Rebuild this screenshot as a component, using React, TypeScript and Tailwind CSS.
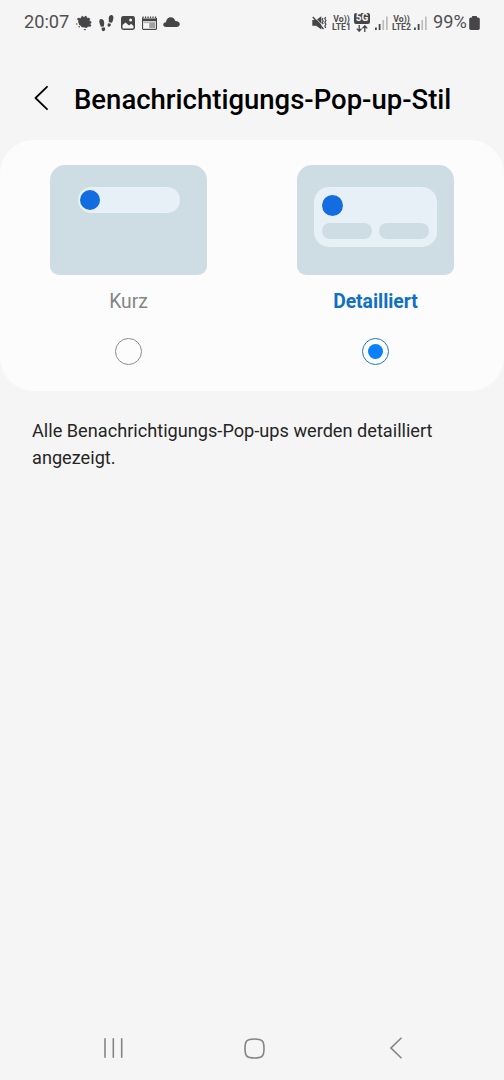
import type { ReactNode } from "react";

function LeafIcon() {
  return (
    <svg className="ml-[7px] h-[18px] w-4 shrink-0" viewBox="0 0 16 18" fill="#464648">
      <path d="M1.400 4.600Q3 3.600 4.800 4.700 5.200 2.200 6.600 2.300L8.200 3.600Q9.200 1.600 10.300 2.300L11 4.300Q13.500 3.500 13.700 4.600 13.900 6 13.200 7 15.500 7.200 15.300 8.400 14.800 9.500 13.600 9.900 15.600 11 15 11.900 13.800 12.700 12.200 12.200 11 13.800 9.800 13.700L8 13.100Q5.200 13.500 4.700 11.400 2.600 11.100 3 9.200 1.800 8 2.700 6.700 1.200 6 1.400 4.600Z" stroke="#464648" strokeLinejoin="round" strokeWidth=".5" />
      <circle cx=".8" cy="10" r=".7" />
      <circle cx="3.200" cy="12.700" r=".8" />
      <path d="M7.400 15h2.800l-1.200 1.400Z" />
    </svg>
  );
}

function StepsIcon() {
  return (
    <svg className="ml-[7px] h-[18px] w-[15px] shrink-0" viewBox="0 0 15 18" fill="#464648">
      <path d="M.3 7.300C.3 5.500 1.200 4.800 2.500 5c1.700.2 2.800 2.100 2.700 4.100L4.900 12.400 1.900 12.700C1.200 10.800.3 9 .3 7.300Z" />
      <path d="m2.600 13.700 3-.4c1 1.600.8 3.400-.7 3.800-1.700.4-2.400-1.200-2.300-3.400Z" />
      <path d="M14.400 3.600c0-2-1-2.900-2.300-2.600-1.600.3-2.500 2-2.400 3.800l.2 3.500 3.100.5c.7-1.600 1.400-3.300 1.400-5.200Z" />
      <path d="m11.900 9.700-2.900-.5c-.8 1.700-.6 3.100.6 3.500 1.500.3 2.300-1.100 2.300-3Z" />
    </svg>
  );
}

function ImageIcon() {
  return (
    <svg className="ml-[7px] h-3.5 w-3.5 shrink-0" viewBox="0 0 14 14">
      <rect width="14" height="14" rx="2.400" fill="#464648" />
      <path d="m1.500 9 3-2.600 3.600 3.100 2-1.700 2.400 2.200v1.600q0 .9-.9.900H2.400q-.9 0-.9-.9Z" fill="#f5f5f5" />
      <circle cx="9.600" cy="4" r="1.500" fill="#f5f5f5" />
    </svg>
  );
}

function NewsIcon() {
  return (
    <svg className="ml-[7px] h-3.5 w-[15px] shrink-0" viewBox="0 0 15 14" fill="none">
      <path d="M0 2h15v10.600q0 1.400-1.400 1.400H1.400Q0 14 0 12.600Z" fill="#464648" />
      <path d="M.4 1.200h14.200" stroke="#464648" strokeWidth="1.400" strokeDasharray="1.300 1.200" />
      <path d="M1.200 2.500h12.600" stroke="#a5a5a5" strokeWidth=".8" />
      <path d="M1.100 5.200h12.800v7.600H1.100Z" fill="#f5f5f5" />
      <path d="M1.800 6.600h11.400" stroke="#a5a5a5" strokeWidth=".9" />
      <path d="M7.200 7h6v5H7.200Z" fill="#a0a0a0" />
    </svg>
  );
}

function CloudIcon() {
  return (
    <svg className="mb-px ml-1.5 h-2.5 w-[17px] shrink-0" viewBox="0 0 17 10" fill="#464648">
      <path d="M3.100 10C1.300 10 .2 9 .2 7.600c0-1.400 1.100-2.400 2.700-2.400C3.400 2.100 5.200.2 7.800.2c2.300 0 3.900 1.400 4.500 3.700 2.600-.1 4.500 1.200 4.500 3.200 0 1.800-1.400 2.900-3.300 2.900Z" />
    </svg>
  );
}

function MuteIcon() {
  return (
    <svg className="h-3.5 w-[15px] shrink-0" viewBox="0 0 15 14">
      <path d="M.3 4h3.900L9.300.3v13.200L4.200 9.700H.3Z" fill="#464648" />
      <path d="m2 .4 9.500 10.200" stroke="#f5f5f5" strokeWidth=".8" />
      <path d="m.8 1 10.700 12" stroke="#464648" strokeWidth="1.400" />
      <path d="m11 2-.8 1.500 1 1.500-1 1.600 1 1.500M13.700 1l-.9 1.800 1.100 1.700-1.100 1.900 1.100 1.900-1.100 1.900 1 1.800" fill="none" stroke="#464648" strokeWidth="1.200" />
    </svg>
  );
}

function VoLte({ sim }: { sim: number }) {
  return (
    <div className="w-[19px] shrink-0 pt-px text-center text-[8.700px] leading-[8px] font-bold whitespace-pre-line text-[#505052]">
      {`Vo))\nLTE${sim}`}
    </div>
  );
}

function FiveG() {
  return (
    <div className="ml-[3px] flex h-[19px] w-4 shrink-0 flex-col items-center">
      <div className="flex h-[10.500px] w-4 items-center justify-center rounded-[2px] bg-[#464648] text-[10px] leading-[10px] font-bold text-[#f5f5f5]">5G</div>
      <svg className="mt-px h-[7px] w-3" viewBox="0 0 12 7" fill="none" stroke="#464648" strokeWidth="1.300">
        <path d="M3.200 0v6M.8 3.600l2.400 2.600 2.400-2.600M8.800 7V1M6.400 3.400 8.800.8l2.400 2.600" />
      </svg>
    </div>
  );
}

function Signal() {
  return (
    <svg className="h-[14px] w-[13px] shrink-0" viewBox="0 0 13 14">
      <path d="M0 11.500h1.800V14H0ZM3.700 8h1.800v6H3.700Z" fill="#464648" />
      <path d="M7.400 4h1.700v10H7.400ZM11 .5h1.700V14H11Z" fill="#bcbcbc" />
    </svg>
  );
}

function StatusBar() {
  return (
    <div className="flex h-[45px] shrink-0 items-center pl-6 text-[18.200px] leading-none text-[#505052]">
      <span className="w-[45px] shrink-0">20:07</span>
      <LeafIcon />
      <StepsIcon />
      <ImageIcon />
      <NewsIcon />
      <CloudIcon />
      <div className="ml-auto flex w-[192px] shrink-0 items-center">
        <MuteIcon />
        <div className="ml-[5px]"><VoLte sim={1} /></div>
        <FiveG />
        <div className="ml-[5px] flex pt-px"><Signal /></div>
        <div className="ml-[4px]"><VoLte sim={2} /></div>
        <div className="ml-[3px] flex pt-px"><Signal /></div>
        <span className="ml-[6px] w-[36px] shrink-0">99%</span>
        <svg className="h-3.5 w-[11px] shrink-0" viewBox="0 0 11 14" fill="#464648">
          <path d="M3 1.500V.7Q3 0 3.700 0h3.600Q8 0 8 .7v.8h1.200q1.600 0 1.600 1.600v9.200q0 1.600-1.600 1.600H1.800Q.2 13.900.2 12.300V3.100Q.2 1.500 1.800 1.500Z" />
        </svg>
      </div>
    </div>
  );
}

function Option({ label, selected, children }: { label: string; selected?: boolean; children: ReactNode }) {
  return (
    <button className="flex w-[157px] flex-col items-center">
      <div className="h-[110px] w-full rounded-t-[15px] rounded-b-[9px] bg-[#cedde3] pt-[22px]">{children}</div>
      <span className={selected ? "mt-[14px] text-[19.300px] leading-[26px] font-bold text-[#0f70c4]" : "mt-[14px] text-[19.300px] leading-[26px] text-[#858585]"}>{label}</span>
      <span className={selected ? "mt-[23.500px] flex size-[27px] items-center justify-center rounded-full border-[1.500px] border-[#1e78c8]" : "mt-[23.500px] flex size-[27px] items-center justify-center rounded-full border border-[#8c8c8c]"}>
        {selected && <span className="size-[15px] rounded-full bg-[#0881fa]" />}
      </span>
    </button>
  );
}

export default function App() {
  return (
    <div className="flex h-[1080px] w-[504px] flex-col bg-[#f5f5f5] font-['Roboto',sans-serif]">
      <StatusBar />
      <header className="flex h-[95px] shrink-0 items-center pt-[14px] pl-[34px]">
        <svg className="mr-[26px] mb-[3px] h-[26px] w-[14px]" viewBox="0 0 14 26" fill="none" stroke="#050505" strokeWidth="1.800" strokeLinecap="round" strokeLinejoin="round">
          <path d="M13 1.800 1.500 13 13 24.200" />
        </svg>
        <h1 className="text-[27.500px] leading-8 font-medium whitespace-nowrap text-black">Benachrichtigungs-Pop-up-Stil</h1>
      </header>
      <main>
        <section className="flex h-[250.500px] justify-between rounded-[34px] bg-[#fcfcfc] pt-[24.600px] pr-[50px] pl-[50px]">
          <Option label="Kurz">
            <div className="ml-[28px] flex h-[26px] w-[102px] items-center rounded-full bg-[#e8f0f7] pl-[2px]">
              <div className="size-[20px] rounded-full bg-[#146de0]" />
            </div>
          </Option>
          <Option label="Detailliert" selected>
            <div className="ml-[17px] flex h-[60px] w-[123px] flex-col justify-between rounded-[15px] bg-[#e8f0f7] p-2">
              <div className="size-[21px] rounded-full bg-[#146de0]" />
              <div className="flex justify-between">
                <div className="h-4 w-[50px] rounded-full bg-[#cedde3]" />
                <div className="h-4 w-[50px] rounded-full bg-[#cedde3]" />
              </div>
            </div>
          </Option>
        </section>
        <p className="mt-[26px] pr-6 pl-8 text-[18.170px] leading-[27px] text-[#252525]">Alle Benachrichtigungs-Pop-ups werden detailliert angezeigt.</p>
      </main>
      <nav className="mt-auto flex h-[64px] shrink-0 items-center pl-[104px] text-[#858585]">
        <svg className="h-5 w-[20px]" viewBox="0 0 20 20" fill="none" stroke="currentColor" strokeWidth="1.600" strokeLinecap="round">
          <path d="M1 .8v18.400M9.300 .8v18.400M17.700 .8v18.400" />
        </svg>
        <svg className="ml-[120px] size-[21px]" viewBox="0 0 21 21" fill="none" stroke="currentColor" strokeWidth="1.600">
          <path d="M10.500 1C18.200 1 20 2.800 20 10.500S18.200 20 10.500 20 1 18.200 1 10.500 2.800 1 10.500 1Z" />
        </svg>
        <svg className="ml-[125px] h-[22px] w-3" viewBox="0 0 12 22" fill="none" stroke="currentColor" strokeWidth="1.600" strokeLinecap="round">
          <path d="M11 1.200 1 11 11 20.800" />
        </svg>
      </nav>
    </div>
  );
}
